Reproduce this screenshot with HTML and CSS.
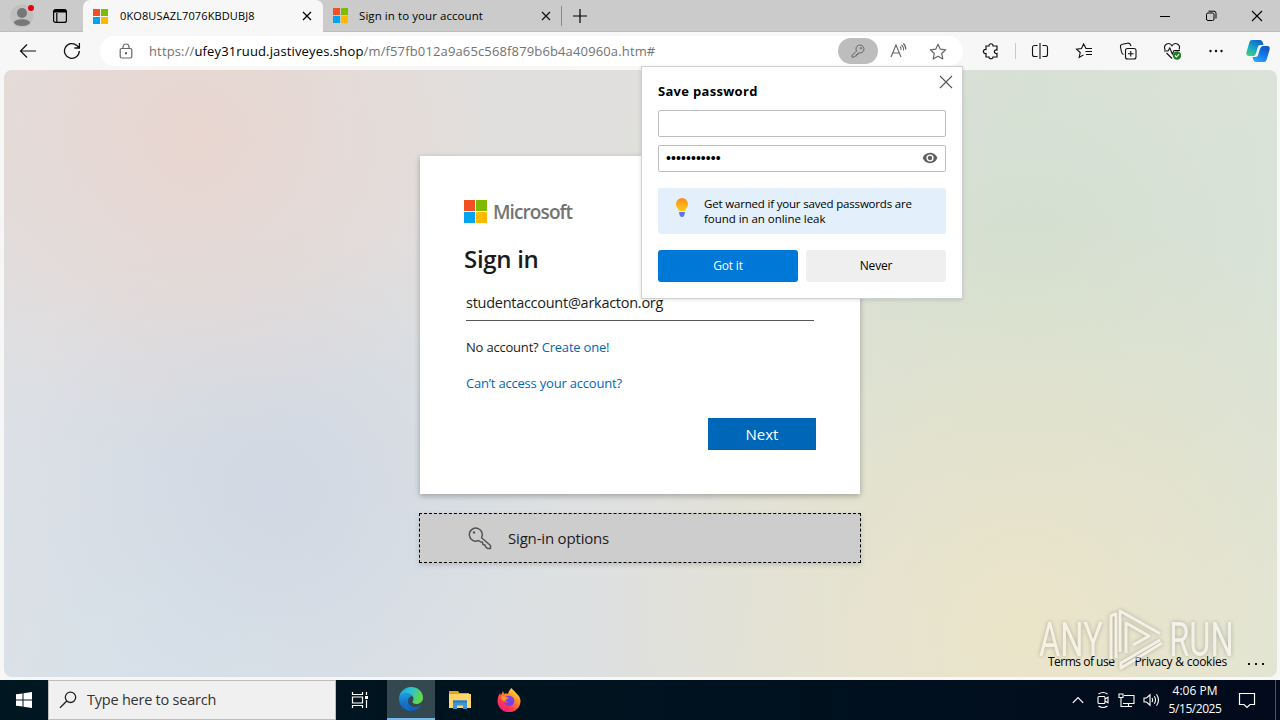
FILE: index.html
```html
<!DOCTYPE html>
<html lang="en">
<head>
    <meta charset="UTF-8">
    <title>Desktop</title>
    <link rel="stylesheet" href="styles.css">
</head>
<body>

<div id="browser">

    <!--tabs-->
    <div class="tabs">
        <div class="profile">
            <svg width="24" height="24" viewBox="0 0 24 24">
                <circle cx="12" cy="12" r="11.5" fill="#c0c0c0"/>
                <circle cx="12" cy="9" r="5" fill="#777"/>
                <path d="M4 19c0-5 16-5 16 0-2 4-14 4-16 0z" fill="#777"/>
                <circle cx="21" cy="4" r="3" fill="#e3000f"/>
            </svg>
        </div>
        <svg class="workspace" width="16" height="16" viewBox="0 0 16 16" fill="none" stroke="#000" stroke-width="1.2">
            <rect x="1.6" y="1.6" width="12.8" height="12.8" rx="2"/>
            <path d="M2 3.2h12" stroke-width="2.6"/>
            <path d="M4.8 5v9" stroke-width="1.2"/>
        </svg>
        <div class="tab on">
            <div class="ms"><i></i><i></i><i></i><i></i></div>
            <span class="t1">0KO8USAZL7076KBDUBJ8</span>
            <svg class="x" width="10" height="10" viewBox="0 0 10 10"><path d="M1 1l8 8M9 1l-8 8" stroke="#000" stroke-width="1.3"/></svg>
        </div>
        <div class="tab">
            <div class="ms"><i></i><i></i><i></i><i></i></div>
            <span class="t2">Sign in to your account</span>
            <svg class="x" width="10" height="10" viewBox="0 0 10 10"><path d="M1 1l8 8M9 1l-8 8" stroke="#111" stroke-width="1.2"/></svg>
        </div>
        <svg class="plus" width="14" height="14" viewBox="0 0 14 14"><path d="M7 0v14M0 7h14" stroke="#000" stroke-width="1.2"/></svg>
        <div class="win">
            <svg width="12" height="12" viewBox="0 0 12 12"><path d="M1 6.5h10" stroke="#000"/></svg>
            <svg width="12" height="12" viewBox="0 0 12 12" fill="none" stroke="#000"><rect x="1.5" y="3" width="7.5" height="7.5" rx="1.5"/><path d="M3.5 1.2H9A2 2 0 0 1 11 3.2v5.3"/></svg>
            <svg width="12" height="12" viewBox="0 0 12 12"><path d="M1 1l10 10M11 1L1 11" stroke="#000" stroke-width="1.1"/></svg>
        </div>
    </div>

    <!--toolbar-->
    <div class="toolbar">
        <svg class="back" width="18" height="16" viewBox="0 0 18 16" fill="none" stroke="#111" stroke-width="1.2"><path d="M17 8H1.5M8 1.5L1.5 8 8 14.5"/></svg>
        <svg class="reload" width="18" height="18" viewBox="0 0 18 18" fill="none" stroke="#111" stroke-width="1.3"><path d="M16.3 9A7.4 7.4 0 1 1 13.8 3.4L16.4 6M16.4 1v5h-5"/></svg>
        <div class="address">
            <svg class="lock" width="14" height="16" viewBox="0 0 14 16" fill="none" stroke="#666" stroke-width="1.2"><rect x="1.2" y="5.5" width="11.6" height="9.5" rx="1.5"/><path d="M4 5.5V4a3 3 0 0 1 6 0v1.5"/><circle cx="7" cy="10.3" r=".6" fill="#555"/></svg>
            <span class="url">https://<b>ufey31ruud.jastiveyes.shop</b>/m/f57fb012a9a65c568f879b6b4a40960a.htm#</span>
            <div class="key">
                <svg width="14" height="14" viewBox="0 0 14 14" fill="none" stroke="#666"><path d="M5.6 7.2A4 4 0 1 1 8.5 9L7 9v1.500H5.4V12H3.8l-1 1.200H1v-2z"/><circle cx="10" cy="4.200" r=".7"/></svg>
            </div>
            <svg class="read" width="17" height="16" viewBox="0 0 17 16" fill="none" stroke="#666" stroke-width="1.1"><path d="M1 14L6 2l5 12M2.800 10h6.400M10 3.500c1 1 1.200 2 1 3.500M11.500 1.800c2 1.700 2.300 3.500 2 5.700M13.300.5c2 1.700 2.700 3.600 2.500 6"/></svg>
            <svg class="star" width="18" height="17" viewBox="0 0 18 17" fill="none" stroke="#666" stroke-width="1.2" stroke-linejoin="round"><path d="M9 1.200l2.300 5 5.400.6-4 3.700 1.100 5.400L9 13.200l-4.800 2.700 1.100-5.400-4-3.700 5.400-.6z"/></svg>
        </div>
        <div class="tools">
            <svg width="18" height="18" viewBox="0 0 18 18" fill="none" stroke="#111" stroke-width="1.2"><path d="M4 4h3c-.5-3 4.500-3 4 0h4v4c-3.500-.7-3.500 4 0 3.500V15h-4c.3 2.300-4.300 2.300-4 0H4v-3.500C.5 12 .5 7 4 7.500z"/></svg>
            <em></em>
            <svg width="18" height="18" viewBox="0 0 18 18" fill="none" stroke="#111" stroke-width="1.1"><path d="M9 1v16M6.500 3.500h-3a2 2 0 0 0-2 2v7a2 2 0 0 0 2 2h3M11.500 3.500h3a2 2 0 0 1 2 2v7a2 2 0 0 1-2 2h-3"/></svg>
            <svg width="18" height="18" viewBox="0 0 18 18" fill="none" stroke="#111" stroke-width="1.1"><path d="M17 6.500h-6L8.600 2 6.500 6.500l-5 .6 3.700 3.400-1 5 4.300-2.600M10.500 9.500H17M11 12.500h6"/></svg>
            <svg width="18" height="18" viewBox="0 0 18 18" fill="none" stroke="#111" stroke-width="1.1"><rect x="6.500" y="6.500" width="10.500" height="10.500" rx="2"/><path d="M11.750 9v5.500M9 11.750h5.500M4.500 12.500C3 12 2.700 11 2.400 9.500L1.500 5C1.200 3.600 2 2.500 3.500 2.200l5-1c1.500-.3 2.800.5 3.200 2l.2 1"/></svg>
            <svg width="18" height="18" viewBox="0 0 18 18" fill="none" stroke="#111" stroke-width="1.1"><path d="M2.200 8C-.5 2 6.500-.5 9 3.800 11.500-.5 18.500 2 16 7.500M3.500 11L9 16.500M1 9h4l1.800-3 2.500 6L11 8.500h6"/><circle cx="14" cy="13.500" r="4.200" fill="#1b7f22" stroke="none"/><path d="M12 13.500l1.500 1.500 2.600-3" stroke="#fff"/></svg>
            <svg width="18" height="18" viewBox="0 0 18 18" fill="#111"><circle cx="3.500" cy="9" r="1.200"/><circle cx="9" cy="9" r="1.200"/><circle cx="14.500" cy="9" r="1.200"/></svg>
        </div>
        <svg class="copilot" width="24" height="24" viewBox="0 0 24 24">
            <defs>
                <linearGradient id="cp1" x1="0" y1="1" x2=".6" y2="0"><stop offset="0" stop-color="#4fd56b"/><stop offset=".5" stop-color="#17a9c8"/><stop offset="1" stop-color="#1068c8"/></linearGradient>
                <linearGradient id="cp2" x1="0" y1="1" x2=".6" y2="0"><stop offset="0" stop-color="#2bb6ff"/><stop offset=".6" stop-color="#1577e8"/><stop offset="1" stop-color="#1557c4"/></linearGradient>
            </defs>
            <path d="M6 1h8q2 0 2.600 2l.9 3h-3q-2 0-2.600 2l-2 6.500Q9 17 7 17H3Q-.5 17 .5 13L3.500 3Q4 1 6 1z" fill="url(#cp1)"/>
            <path d="M18 23h-8q-2 0-2.600-2l-.9-3h3q2 0 2.600-2l2-6.500Q15 7 17 7h4q3.500 0 2.500 4l-3 10q-.5 2-2.500 2z" fill="url(#cp2)"/>
        </svg>
    </div>

    <!--web page-->
    <div class="page">
        <div class="card">
            <div class="logo"><div class="ms"><i></i><i></i><i></i><i></i></div><span>Microsoft</span></div>
            <h1>Sign in</h1>
            <div class="email"><span>studentaccount@arkacton.org</span></div>
            <p class="create">No account? <a>Create one!</a></p>
            <p class="access"><a>Can’t access your account?</a></p>
            <div class="next"><span>Next</span></div>
        </div>
        <div class="options">
            <svg width="24" height="24" viewBox="0 0 24 24" fill="none" stroke="#555" stroke-width="1.5" stroke-linejoin="round"><path d="M13.500 11.800A6.500 6.500 0 1 0 10.600 14.500l2.200 1.500 1.700.3.500 2.200 2 .4.700 2 1.800 1.600h3v-3z"/><circle cx="6" cy="6.500" r="1.200" fill="#555" stroke="none"/></svg>
            <span>Sign-in options</span>
        </div>
        <div class="footer">
            <span class="terms">Terms of use</span>
            <span class="privacy">Privacy &amp; cookies</span>
            <svg width="18" height="4" viewBox="0 0 18 4"><path d="M1 1h2v2H1zM8 1h2v2H8zM15 1h2v2h-2z" fill="#111"/></svg>
        </div>

        <!--watermark-->
        <div class="anyrun">
            <span>ANY</span>
            <svg width="58" height="64" viewBox="0 0 58 64" fill="none" stroke="#fff" stroke-width="3" stroke-linejoin="round"><path d="M13 44V3l40 22.500M53 32L14 55v5l41-25M4 53V9q0-2 5-3v44M19 45V15l23 13-16 9"/></svg>
            <span>RUN</span>
        </div>
    </div>

    <!--password bubble, hangs from the key button-->
    <div class="save">
        <svg class="close" width="14" height="14" viewBox="0 0 14 14"><path d="M1 1l12 12M13 1L1 13" stroke="#555" stroke-width="1.1"/></svg>
        <h2><span>Save password</span></h2>
        <div class="field"></div>
        <div class="field">
            <span class="dots">•••••••••••</span>
            <svg width="16" height="12" viewBox="0 0 16 12"><path d="M8 .8C4.500.8 1.800 3 .7 6c1.100 3 3.800 5.200 7.300 5.200S14.200 9 15.300 6C14.200 3 11.500.8 8 .8z" fill="#606060"/><circle cx="8" cy="6" r="2.900" fill="#606060" stroke="#fff" stroke-width="1.4"/></svg>
        </div>
        <div class="tip">
            <svg width="14" height="22" viewBox="0 0 14 22">
                <defs><linearGradient id="bulb" x1="0" y1="0" x2="0" y2="1"><stop offset="0" stop-color="#f78d1e"/><stop offset="1" stop-color="#ffcb12"/></linearGradient></defs>
                <path d="M7 2a6 6 0 0 0-6 6c0 3.500 2.500 4.500 3 7h6c.5-2.500 3-3.500 3-7a6 6 0 0 0-6-6z" fill="url(#bulb)"/>
                <path d="M4 16h6l-.5 2.800Q9 21 7 21t-2.500-2.200z" fill="#5b76e8"/>
            </svg>
            <p><span class="w1">Get warned if your saved passwords are</span><br><span class="w2">found in an online leak</span></p>
        </div>
        <div class="btns">
            <div class="btn blue">Got it</div>
            <div class="btn">Never</div>
        </div>
    </div>
</div>

<!--windows taskbar-->
<div id="taskbar">
    <div class="start">
        <svg width="16" height="16" viewBox="0 0 16 16" fill="#fff"><path d="M0 2.300L6.500 1.400V7.500H0zM7.500 1.200L16 0v7.500H7.500zM0 8.500h6.500v6.100L0 13.700zM7.500 8.500H16V16l-8.500-1.200z"/></svg>
    </div>
    <div class="search">
        <svg width="18" height="18" viewBox="0 0 18 18" fill="none" stroke="#222" stroke-width="1.3"><circle cx="11.500" cy="6.300" r="5.200"/><path d="M7.800 10L1 16.800"/></svg>
        <span>Type here to search</span>
    </div>
    <div class="app view">
        <svg width="18" height="18" viewBox="0 0 18 18" fill="none" stroke="#fff" stroke-width="1.2"><path d="M1.500 1v2.500h10V1M1.500 17v-2.500h10V17M1.500 6h10v6h-10zM15.500 1v3M15.500 9v8"/><path d="M14 5h3v3h-3z" fill="#fff" stroke="none"/></svg>
    </div>
    <div class="app on">
        <svg width="26" height="26" viewBox="0 0 26 26">
            <defs>
                <linearGradient id="e1" x1="0" y1="0" x2="1" y2=".3"><stop offset="0" stop-color="#1b9de2"/><stop offset=".5" stop-color="#2bc3d2"/><stop offset="1" stop-color="#62d84b"/></linearGradient>
                <linearGradient id="e2" x1="0" y1="0" x2="0" y2="1"><stop offset="0" stop-color="#1b9de2"/><stop offset="1" stop-color="#0f58b5"/></linearGradient>
            </defs>
            <path d="M1 12C2 5 7 1 13 1c7 0 12 5 12 10.500 0 4-3 6.500-6.500 6.500-3 0-4-1.200-4-2 0-.8 1-1.500 1-3.500C15.500 9 11 7 7 7.500 4 8 2 10 1 12z" fill="url(#e1)"/>
            <path d="M1 13c0-3 3-6 7-6 3.500 0 6 1.500 7 3.500-2-1-5 1-5 4.500 0 5 5 8 13 4.500-2 3.500-6 5.500-10 5.500C6 25 1 19.500 1 13z" fill="url(#e2)"/>
            <path d="M10 12c-3 2.500-3.500 9 3.500 13-4 0-8-4-8-8 0-2.500 2-4.500 4.500-5z" fill="#1374cb"/>
        </svg>
    </div>
    <div class="app">
        <svg width="22" height="20" viewBox="0 0 22 20"><path d="M0 1h9l1.500 2H20v5H0z" fill="#e8a21c"/><path d="M0 4h22v14H0z" fill="#ffd667"/><path d="M4 10.500h14V19h-4v-3.500H8V19H4z" fill="#3a96d7"/><path d="M4 10.500h14v2H4z" fill="#2f7fbd"/></svg>
    </div>
    <div class="app">
        <svg width="24" height="24" viewBox="0 0 24 24">
            <defs><linearGradient id="fx" x1=".9" y1="0" x2=".2" y2="1"><stop offset="0" stop-color="#fff44f"/><stop offset=".35" stop-color="#ff9b23"/><stop offset=".7" stop-color="#ff3b55"/><stop offset="1" stop-color="#f0157c"/></linearGradient></defs>
            <path d="M14.500 0c1 2 3 3 5 5.500C22 8 23.500 10 23.500 13A11.500 11.300 0 0 1 .5 13c0-3 1-5.500 2.500-8l.8 2.500L6 3l1 3c1.500-.6 3-.5 4 0 .5-2.500 1.800-4.500 3.500-6z" fill="url(#fx)"/>
            <path d="M7 10.500c2-3 6-3.500 8.500-1.500 3 2.500 2.500 7.500-1.500 8.800-3.500 1-6.500-.8-7-3.500 1.200.8 3 .7 4-.8-2-.2-3.500-1-4-3z" fill="#7542e5"/>
            <path d="M4 9c2-1.500 4-1 5 .2l2.500.3c.3 1-1.500 1.800-2.500 2l-.8 1.800C5.500 13 4.500 11.500 4 9z" fill="#ff9a1f"/>
        </svg>
    </div>
    <div class="tray">
        <svg width="12" height="8" viewBox="0 0 12 8" fill="none" stroke="#fff" stroke-width="1.2"><path d="M.8 6.800L6 1.500l5.200 5.300"/></svg>
        <svg class="cam" width="14" height="18" viewBox="0 0 14 18" fill="none" stroke="#fff" stroke-width="1.1"><rect x="2" y="5.500" width="7" height="7" rx="1"/><path d="M9 8l3-1.800v5.600L9 10M2.500 3q4.500-3 9 0M2.500 15q4.500 3 9 0"/></svg>
        <svg width="17" height="16" viewBox="0 0 17 16" fill="none" stroke="#fff" stroke-width="1.1"><path d="M6 3.500h10v8H5M7 14.500h7M10.500 11.500v3M1 2h4v3.500H1zM3 5.500v9h4"/></svg>
        <svg width="17" height="14" viewBox="0 0 17 14" fill="none" stroke="#fff" stroke-width="1.1"><path d="M1 5h2.500L7 1.800v10.400L3.500 9H1zM9 5q1.200 2 0 4M11.300 3.200q2.500 3.800 0 7.600M13.500 1.200q4 5.800 0 11.600"/></svg>
    </div>
    <div class="clock"><span class="time">4:06 PM</span><span class="date">5/15/2025</span></div>
    <svg class="note" width="18" height="17" viewBox="0 0 18 17" fill="none" stroke="#fff" stroke-width="1.2"><path d="M1.500 1.500h15v11H12L9 15.500 6 12.500H1.500z"/></svg>
    <div class="peek"></div>
</div>

</body>
</html>
```
FILE: styles.css
```css
* {
    margin: 0;
    padding: 0;
    box-sizing: border-box;
}

body {
    width: 1280px;
    height: 720px;
    overflow: hidden;
    font: 12px/16px "Open Sans", "Noto Sans", sans-serif;
    color: #000;
}

svg {
    display: block;
    flex: none;
}

span {
    white-space: nowrap;
}

/*four colour squares*/
.ms {
    display: grid;
    grid-template-columns: 1fr 1fr;
    gap: 1px;
    width: 15px;
    height: 15px;
    flex: none;
}
.ms i:nth-child(1) {
    background: #f25022;
}
.ms i:nth-child(2) {
    background: #7fba00;
}
.ms i:nth-child(3) {
    background: #00a4ef;
}
.ms i:nth-child(4) {
    background: #ffb900;
}

#browser {
    position: relative;
    display: flex;
    flex-direction: column;
    height: 680px;
    background: #f7f7f7;
}

/*tabs*/
.tabs {
    display: flex;
    align-items: center;
    height: 32px;
    background: #cbcbcb;
    border-bottom: 1px solid #bebebe;
}
.profile {
    margin-left: 10px;
}
.workspace {
    margin-left: 18px;
}
.tab {
    display: flex;
    align-items: center;
    width: 239px;
    height: 20px;
    padding: 0 10px;
    border-right: 1px solid #888;
}
.tab.on {
    width: 240px;
    height: 32px;
    margin: 0 0 -1px 15px;
    padding-right: 11px;
    background: #f7f7f7;
    border: none;
    border-radius: 7px 7px 0 0;
}
.tab span {
    margin-left: 11px;
}
.tab .x {
    margin-left: auto;
}
.tab .t1 {
    margin-left: 12px;
    font-size: 11px;
    letter-spacing: 0.12px;
}
.t2 {
    font-size: 11.5px;
    letter-spacing: 0.07px;
}
.plus {
    margin-left: 11px;
}
.win {
    display: flex;
    gap: 34px;
    margin: 0 17px 0 auto;
}

/*toolbar*/
.toolbar {
    display: flex;
    align-items: center;
    height: 38px;
}
.back {
    margin-left: 19px;
}
.reload {
    margin-left: 26px;
}
.address {
    display: flex;
    align-items: center;
    width: 863px;
    height: 30px;
    margin-left: 19px;
    background: #fff;
    border-radius: 15px;
}
.lock {
    margin-left: 19px;
}
.url {
    margin-left: 16px;
    font-size: 13px;
    color: #737373;
    letter-spacing: 0.14px;
}
.url b {
    font-weight: 400;
    color: #000;
}
.key {
    display: flex;
    align-items: center;
    justify-content: center;
    width: 40px;
    height: 26px;
    margin-left: auto;
    background: #bdbdbd;
    border-radius: 13px;
}
.read {
    margin-left: 12px;
}
.star {
    margin: 0 16px 0 22px;
}
.tools {
    display: flex;
    align-items: center;
    gap: 26px;
    margin-left: 19px;
}
.tools em {
    width: 1px;
    height: 16px;
    margin: 0 -11px;
    background: #c8c8c8;
}
.copilot {
    margin-left: 21px;
}

/*web page*/
.page {
    position: relative;
    flex: 1;
    margin: 0 3px 3px 4px;
    padding-top: 86px;
    border-radius: 8px;
    overflow: hidden;
    background:
        radial-gradient(circle at 190px 70px, rgba(233, 213, 206, .9), rgba(233, 213, 206, 0) 300px),
        radial-gradient(circle at 270px 420px, rgba(207, 215, 227, .85), rgba(207, 215, 227, 0) 280px),
        radial-gradient(circle at 1020px 560px, rgba(235, 228, 200, 1), rgba(235, 228, 200, 0) 420px),
        radial-gradient(circle at 1020px 190px, rgba(211, 223, 208, 1), rgba(211, 223, 208, 0) 420px),
        radial-gradient(circle at 150px 620px, rgba(216, 226, 234, 1), rgba(216, 226, 234, 0) 620px),
        linear-gradient(100deg, #e2dddd, #e0e0dd 55%, #dde5da);
}
.card {
    width: 440px;
    height: 338px;
    margin: 0 auto 0 416px;
    padding: 44px;
    background: #fff;
    box-shadow: 0 2px 6px rgba(0, 0, 0, .28);
}
.logo {
    display: flex;
    align-items: center;
    height: 23px;
}
.logo .ms {
    width: 23px;
    height: 23px;
}
.logo span {
    margin-left: 6px;
    font-size: 19px;
    font-weight: 600;
    color: #737373;
    letter-spacing: -0.9px;
}
.card h1 {
    margin-top: 20px;
    font-size: 24px;
    line-height: 32px;
    font-weight: 600;
    color: #1b1b1b;
    letter-spacing: -0.3px;
}
.email {
    height: 35px;
    margin: 11px 2px 0;
    line-height: 33px;
    font-size: 14.5px;
    letter-spacing: -0.27px;
    color: #1b1b1b;
    border-bottom: 1px solid #555;
}
.card p {
    margin-left: 2px;
    font-size: 13px;
    line-height: 20px;
    letter-spacing: -0.2px;
    color: #1b1b1b;
}
.card a {
    color: #0067b8;
}
.card .create, .card .access {
    margin-top: 16px;
}
.next {
    width: 108px;
    height: 32px;
    margin: 25px 0 0 auto;
    line-height: 32px;
    text-align: center;
    font-size: 15px;
    color: #fff;
    background: #0067b8;
}
.options {
    display: flex;
    align-items: center;
    width: 442px;
    height: 50px;
    margin: 19px 0 0 415px;
    padding-left: 48px;
    background: #cdcdcd;
    border: 1px dashed #000;
    box-shadow: 0 2px 5px rgba(0, 0, 0, .15);
}
.options span {
    margin-left: 16px;
    font-size: 15px;
    letter-spacing: -0.18px;
    color: #1b1b1b;
}
.footer {
    position: absolute;
    right: 12px;
    bottom: 7px;
    display: flex;
    align-items: center;
}
.terms {
    letter-spacing: -0.5px;
}
.privacy {
    margin: 0 20px;
    letter-spacing: -0.23px;
}
.footer svg {
    margin-top: 4px;
}
.anyrun {
    position: absolute;
    right: 43px;
    bottom: 5px;
    display: flex;
    align-items: center;
    gap: 4px;
    opacity: .5;
    filter: drop-shadow(0 0 2px rgba(0, 0, 0, .5));
}
.anyrun span {
    font: 48px/50px "Roboto", sans-serif;
    color: #fff;
    transform: scaleX(.68);
    margin: 0 -15px;
}

/*password bubble*/
.save {
    position: absolute;
    left: 641px;
    top: 66px;
    width: 322px;
    height: 233px;
    padding: 16px;
    background: #fff;
    border: 1px solid #d0d0d0;
    box-shadow: 0 1px 4px rgba(0, 0, 0, .12);
}
.save .close {
    position: absolute;
    right: 9px;
    top: 8px;
}
.save h2 {
    height: 19px;
    font-size: 13px;
    line-height: 17px;
    font-weight: 700;
    letter-spacing: 0.3px;
}
.field {
    display: flex;
    align-items: center;
    justify-content: space-between;
    height: 27px;
    margin-top: 8px;
    padding: 0 7px 1px;
    border: 1px solid #bdbdbd;
    border-radius: 2px;
}
.dots {
    font: 14px/14px "Liberation Sans", sans-serif;
    letter-spacing: 0.08px;
}
.tip {
    display: flex;
    height: 46px;
    margin-top: 16px;
    padding: 8px 17px;
    background: #e3effa;
    border-radius: 3px;
}
.tip p {
    margin-left: 15px;
    font-size: 11.5px;
    line-height: 15px;
}
.w1 {
    letter-spacing: -0.18px;
}
.w2 {
    letter-spacing: -0.04px;
}
.btns {
    display: flex;
    gap: 8px;
    margin-top: 16px;
}
.btn {
    flex: 1;
    height: 32px;
    line-height: 32px;
    text-align: center;
    letter-spacing: -0.2px;
    background: #efefef;
    border-radius: 3px;
}
.btn.blue {
    color: #fff;
    background: #0078d7;
}

/*taskbar*/
#taskbar {
    display: flex;
    height: 40px;
    align-items: center;
    background: linear-gradient(90deg, #001721, #00121f 60%, #020a1c);
}
.start, .app {
    display: flex;
    align-items: center;
    justify-content: center;
    width: 48px;
    height: 40px;
}
.app {
    width: 49px;
}
.app.view {
    width: 48px;
    margin-right: 3px;
}
.app.on {
    width: 48px;
    background: #33484f;
    border-bottom: 2px solid #76b9ed;
}
.search {
    display: flex;
    align-items: center;
    width: 288px;
    height: 40px;
    padding-left: 10px;
    background: #f0f0f0;
    border: 1px solid #c0bcba;
}
.search span {
    margin-left: 10px;
    font-size: 14.5px;
    letter-spacing: -0.23px;
    color: #333;
}
.tray {
    display: flex;
    align-items: center;
    gap: 8px;
    margin-left: auto;
}
.tray .cam {
    margin-left: 4px;
}
.clock {
    display: flex;
    flex-direction: column;
    align-items: center;
    width: 54px;
    margin-left: 8px;
    line-height: 18px;
    color: #fff;
}
.date {
    letter-spacing: -0.45px;
}
.note {
    margin: 0 19px 0 16px;
}
.peek {
    width: 5px;
    height: 40px;
    border-left: 1px solid #4a5563;
}
```
